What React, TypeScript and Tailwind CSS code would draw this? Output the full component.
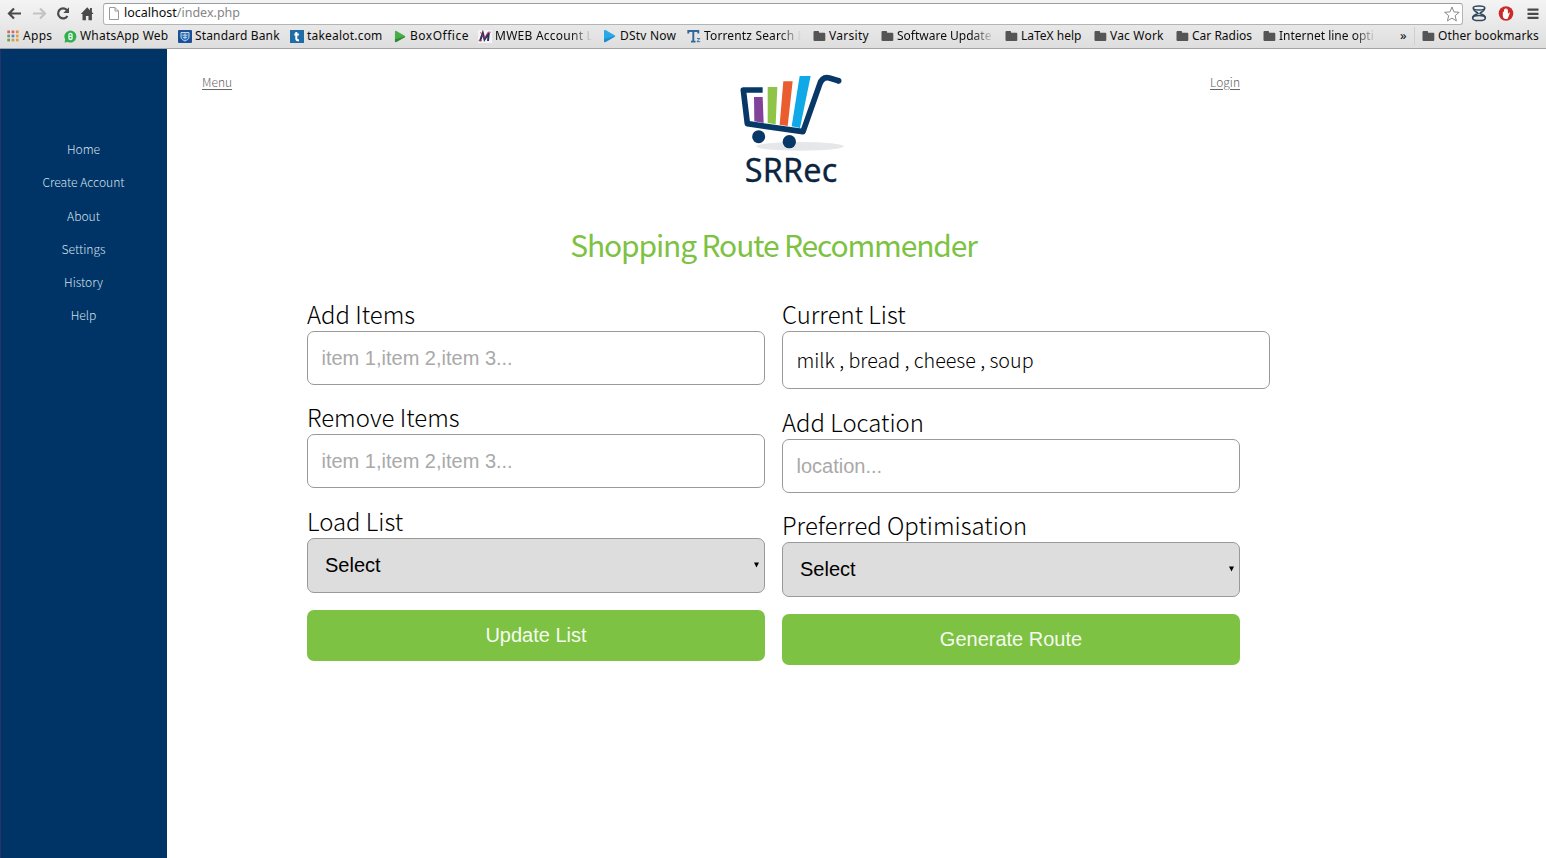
import type { ReactNode } from "react";

const sourceFont = "font-['Noto_Sans_CJK_SC','Noto_Sans',sans-serif]";
const arial = "font-['Liberation_Sans',Arial,sans-serif]";

function Folder() {
  return (
    <svg width="13" height="12" viewBox="0 0 13 12">
      <path d="M0.5 2a1 1 0 0 1 1-1h3.600a1 1 0 0 1 1 1v0.700h5.200a1 1 0 0 1 1 1V10a1 1 0 0 1-1 1H1.500a1 1 0 0 1-1-1z" fill="#555" />
    </svg>
  );
}

function AppsIcon() {
  const colors = ["#d9645a", "#d9645a", "#e08a4c", "#63a06b", "#5b7fc0", "#e0a33e", "#6f9a58", "#c9a23c", "#d9a33e"];
  return (
    <svg width="13" height="12" viewBox="0 0 13 12">
      {colors.map((c, i) => (
        <rect key={i} x={0.3 + (i % 3) * 4.3} y={0.5 + Math.floor(i / 3) * 4.1} width="2.7" height="2.7" fill={c} />
      ))}
    </svg>
  );
}

function WhatsApp() {
  return (
    <svg width="13" height="13" viewBox="0 0 13 13">
      <path d="M.5 12.500 1.200 9.500A6 6 0 1 1 4 12z" fill="#2fb04c" />
      <rect x="4.300" y="2.800" width="4.400" height="7.400" rx="2" fill="#e9f7ec" />
      <path d="M5.600 4.300h1.800v1.400H5.600zM5.600 7.100h1.800v1.400H5.600z" fill="#2fb04c" />
    </svg>
  );
}

function BankIcon() {
  return (
    <svg width="14" height="13" viewBox="0 0 14 13">
      <rect width="14" height="13" rx="1" fill="#1b4f98" />
      <path d="M3 2.500h8v4.500c0 2-2 3.200-4 4-2-.8-4-2-4-4z" fill="#2c6fb8" stroke="#d5e4f3" strokeWidth="0.9" />
      <path d="M4.500 5.200h5M5 7.400h4M7 3.200v6" stroke="#d5e4f3" strokeWidth="0.8" />
    </svg>
  );
}

function TakealotIcon() {
  return (
    <svg width="14" height="13" viewBox="0 0 14 13">
      <rect width="14" height="13" fill="#1f6ca6" />
      <path d="M6.300 2v6.800q0 1.700 2.700 1.400M4.300 4.600h4.600" stroke="#fff" strokeWidth="2" fill="none" />
    </svg>
  );
}

function Play({ fill, dark, size }: { fill: string; dark: string; size: number }) {
  return (
    <svg width={size} height={size + 1} viewBox="0 0 13 14">
      <path d="M1 2q0-1.500 1.500-1L11.600 6.200q1.200.8 0 1.600L2.500 13Q1 13.500 1 12z" fill={fill} />
      <path d="M1 12q0 1.500 1.500 1L11.600 7.800q.6-.4.6-.8L1 10z" fill={dark} />
    </svg>
  );
}

function MwebIcon() {
  return (
    <svg width="14" height="13" viewBox="0 0 14 13">
      <rect width="14" height="13" fill="#f6f4f6" />
      <path d="M2 11 4.800 3l1.700 6.500L10.800 3 10 11" stroke="#27305f" strokeWidth="2" fill="none" />
      <path d="M.5 10.800h3.500M2.500 2.200l3.500 5.500M12.800 2.200H10L6.500 8.500" stroke="#c2335a" strokeWidth="0.9" fill="none" />
    </svg>
  );
}

function TorrentzIcon() {
  return (
    <svg width="14" height="14" viewBox="0 0 14 14">
      <path d="M.8 2h11M1.300 1v3.500M11.300 1v3.500M6.300 2v10.500M4 12.600h4.500" stroke="#2f669c" strokeWidth="1.900" fill="none" />
      <path d="M10 9.500h2.800l-2.800 3.200h3.200" stroke="#2f669c" strokeWidth="0.9" fill="none" />
    </svg>
  );
}

type BookmarkProps = { icon: ReactNode; box: string; tracking?: string; fade?: boolean; children: string };

function Bookmark({ icon, box, tracking = "", fade = false, children }: BookmarkProps) {
  return (
    <a className={`flex shrink-0 items-center gap-[3px] ${box}`}>
      <span className="flex w-[14px] shrink-0 justify-center">{icon}</span>
      <span
        className={`whitespace-nowrap ${tracking} ${
          fade ? "w-[97px] [mask-image:linear-gradient(to_right,black_78%,transparent_100%)]" : ""
        }`}
      >
        {children}
      </span>
    </a>
  );
}

function BrowserBar() {
  return (
    <header className="h-[49px] shrink-0 border-b border-[#a3a3a3] bg-linear-to-b from-[#f4f4f4] to-[#dedede] font-['Noto_Sans','Open_Sans',sans-serif] text-xs text-[#0c0c0c]">
      <div className="flex h-[25px] items-center pt-[2px]">
        <div className="flex w-[103px] items-center">
          <svg className="ml-[7px]" width="15" height="14" viewBox="0 0 15 14" fill="none" stroke="#4a4a4a" strokeWidth="2.200">
            <path d="M14 6.500H2.500M7 1.500 2 6.500l5 5" />
          </svg>
          <svg className="ml-[10px]" width="15" height="14" viewBox="0 0 15 14" fill="none" stroke="#c3c3c3" strokeWidth="2.200">
            <path d="M1 6.500h11.500M8 1.500l5 5-5 5" />
          </svg>
          <svg className="ml-[9px]" width="14" height="14" viewBox="0 0 14 14">
            <path d="M11.400 9A5 5 0 1 1 10.800 3.100" fill="none" stroke="#4a4a4a" strokeWidth="2.200" />
            <path d="M13 .3v5.700H7.300z" fill="#4a4a4a" />
          </svg>
          <svg className="ml-[10px]" width="14" height="14" viewBox="0 0 14 14">
            <path d="M7.200.3.8 6.900h1.700V13.300h3.400V9h2.600v4.300h3.400V6.900h1.700L11.900 5V1H10v2.200z" fill="#4a4a4a" />
          </svg>
        </div>
        <div className="flex h-[22px] w-[1360px] items-center rounded-[3px] border border-[#b4b4b4] border-t-[#98a0a6] bg-white pl-[5px] pr-[2px]">
          <svg width="10" height="13" viewBox="0 0 10 13" fill="#fff" stroke="#9a9a9a">
            <path d="M.5.500h5.500l3.500 3.500v8.500h-9zM6 .5V4h3.500" />
          </svg>
          <span className="ml-[5px] flex-1 text-[12.500px]">
            localhost<span className="text-[#858585]">/index.php</span>
          </span>
          <svg width="17" height="16" viewBox="0 0 17 16" fill="#fff" stroke="#8a8a8a" strokeWidth="1">
            <path d="m9 1 1.900 4.900 5.300.4-4.100 3.400 1.300 5.200L9 12.100l-4.600 2.800 1.300-5.200L1.600 6.300l5.300-.4z" />
          </svg>
        </div>
        <svg className="ml-[8px]" width="16" height="17" viewBox="0 0 16 17" fill="none" stroke="#31495c" strokeWidth="1.500">
          <ellipse cx="8" cy="3" rx="5.800" ry="2" />
          <path d="M2.300 3.600C3 6.700 6 6.800 7 8.300 5 9.600 1.600 10 1.600 13M13.700 3.600C13 6.700 10 6.800 9 8.300c2 1.300 5.400 1.700 5.400 4.700" />
          <ellipse cx="8" cy="13" rx="6.400" ry="2.600" />
        </svg>
        <svg className="ml-[11px]" width="16" height="16" viewBox="0 0 16 16">
          <circle cx="8" cy="7.500" r="7.300" fill="#cb2a2a" />
          <path d="M4.800 6q.7-.9 1.200 0V3.500q.7-.8 1.200 0V2.600q.8-.8 1.400 0v.9q.7-.7 1.300 0v4.400l1-1.200q1.100-.4.9.5L10 12q-.4.900-1.200.9H7.200Q4.800 12.500 4.800 10z" fill="#fff" />
        </svg>
        <svg className="ml-[13px]" width="12" height="12" viewBox="0 0 12 12" stroke="#4a4a4a" strokeWidth="2.300">
          <path d="M.5 1.700h11M.5 5.800h11M.5 9.900h11" />
        </svg>
      </div>
      <div className="flex h-[22px] items-center pl-[6px]">
        <Bookmark icon={<AppsIcon />} box="w-[57px]" tracking="tracking-[0.3px]">Apps</Bookmark>
        <Bookmark icon={<WhatsApp />} box="w-[115px]" tracking="tracking-[0.2px]">WhatsApp Web</Bookmark>
        <Bookmark icon={<BankIcon />} box="w-[112px]" tracking="tracking-[0.15px]">Standard Bank</Bookmark>
        <Bookmark icon={<TakealotIcon />} box="w-[103px]" tracking="tracking-[0.2px]">takealot.com</Bookmark>
        <Bookmark icon={<Play fill="#49ac49" dark="#2c8c34" size={12} />} box="w-[85px]" tracking="tracking-[0.5px]">BoxOffice</Bookmark>
        <Bookmark icon={<MwebIcon />} box="w-[124px]" tracking="tracking-[0.25px]" fade>MWEB Account L</Bookmark>
        <Bookmark icon={<Play fill="#2aa8e6" dark="#1b8dd0" size={13} />} box="w-[85px] gap-[4px]" tracking="tracking-[0.2px]">DStv Now</Bookmark>
        <Bookmark icon={<TorrentzIcon />} box="w-[125px]" tracking="tracking-[0.150px]" fade>Torrentz Search E</Bookmark>
        <Bookmark icon={<Folder />} box="w-[68px]" tracking="tracking-[0.3px]">Varsity</Bookmark>
        <Bookmark icon={<Folder />} box="w-[124px]" tracking="tracking-[0px]" fade>Software Update</Bookmark>
        <Bookmark icon={<Folder />} box="w-[89px]">LaTeX help</Bookmark>
        <Bookmark icon={<Folder />} box="w-[82px]" tracking="tracking-[0.2px]">Vac Work</Bookmark>
        <Bookmark icon={<Folder />} box="w-[87px]">Car Radios</Bookmark>
        <Bookmark icon={<Folder />} box="w-[138px]" fade>Internet line opti</Bookmark>
        <span className="w-[14px] text-[13px]">»</span>
        <span className="mr-[6px] h-[18px] w-px bg-[#d0d0d0]" />
        <Bookmark icon={<Folder />} box="w-[120px]" tracking="tracking-[0.1px]">Other bookmarks</Bookmark>
      </div>
    </header>
  );
}

function Logo() {
  return (
    <svg width="140" height="135" viewBox="0 0 420 405">
      <ellipse cx="240" cy="259" rx="132" ry="13" fill="#e6e7e8" />
      <path d="M102 111h26l3 78-28-5z" fill="#83429a" />
      <path d="M143 81h29l-5 112-24-4z" fill="#8ec549" />
      <path d="M190 64h28l-15 134-24-4z" fill="#e95d2e" />
      <path d="M239 48h33l-32 156-25-5z" fill="#0fa9e8" />
      <path d="M128 90H70l12 101 167 24 50-142q8-24 29-19l30 9" fill="none" stroke="#073868" strokeWidth="17" strokeLinejoin="round" />
      <circle cx="356" cy="62.500" r="8.500" fill="#073868" />
      <circle cx="116" cy="230" r="19.500" fill="#073868" />
      <circle cx="208" cy="245" r="20" fill="#073868" />
      <text x="74" y="367" fontSize="97" textLength="278" className="font-['Noto_Sans','Open_Sans',sans-serif] font-normal" fill="#0b2440" stroke="#0b2440" strokeWidth="1">
        SRRec
      </text>
    </svg>
  );
}

function Field({ label, children }: { label: string; children: ReactNode }) {
  return (
    <label className="block">
      <span className={`block h-[33px] text-[23.900px] leading-[31px] font-light text-black ${sourceFont}`}>{label}</span>
      {children}
    </label>
  );
}

function TextInput({ placeholder }: { placeholder: string }) {
  return (
    <input
      placeholder={placeholder}
      className={`mb-[16.300px] block h-[54px] w-[458px] rounded-[7px] border border-[#999] bg-white px-[13.500px] text-xl placeholder:text-[#a9a9a9] ${arial}`}
    />
  );
}

function SelectBox() {
  return (
    <div className="mb-[17px] flex h-[55px] w-[458px] items-center justify-between rounded-[7px] border border-[#999] bg-[#ddd] pr-[4px] pb-[1px] pl-[17px]">
      <span className={`text-xl text-black ${arial}`}>Select</span>
      <svg width="7" height="6" viewBox="0 0 7 6">
        <path d="M1 .5h5L3.500 5.500z" fill="#000" />
      </svg>
    </div>
  );
}

function GreenButton({ children }: { children: string }) {
  return (
    <button className={`block h-[51px] w-[458px] rounded-[7px] bg-[#7dc242] pb-[1px] text-xl text-[#f4fbee] ${arial}`}>{children}</button>
  );
}

const menu = ["Home", "Create Account", "About", "Settings", "History", "Help"];

export default function App() {
  return (
    <div className="flex h-screen flex-col overflow-hidden bg-white">
      <BrowserBar />
      <div className="flex flex-1">
        <nav className={`flex w-[167px] shrink-0 flex-col items-center border-l border-[#26336a] bg-[#003466] pt-[83px] pr-[1px] text-[12.100px] font-light text-[#d3e0ec] ${sourceFont}`}>
          {menu.map((m) => (
            <a key={m} className="h-[33.300px] leading-[33px]">{m}</a>
          ))}
        </nav>
        <main className="flex-1">
          <div className={`ml-[35px] flex w-[1038px] items-start pt-[11px] text-[12px] font-light text-[#666] ${sourceFont}`}>
            <a className="mt-[13px] w-[30px] leading-[18px] underline underline-offset-2">Menu</a>
            <div className="ml-[488px] flex-1"><Logo /></div>
            <a className="mt-[13px] leading-[18px] underline underline-offset-2">Login</a>
          </div>
          <div className="ml-[140px] w-[933px]">
            <h1 className={`mt-[29px] h-[74px] text-center text-[30px] leading-[40px] tracking-[-1.150px] text-[#7dc242] ${sourceFont}`}>Shopping Route Recommender</h1>
            <div className="flex gap-[17px]">
              <div className="w-[458px]">
                <Field label="Add Items"><TextInput placeholder="item 1,item 2,item 3..." /></Field>
                <Field label="Remove Items"><TextInput placeholder="item 1,item 2,item 3..." /></Field>
                <Field label="Load List"><SelectBox /></Field>
                <GreenButton>Update List</GreenButton>
              </div>
              <div className="w-[458px]">
                <Field label="Current List">
                  <div className={`mb-[17px] h-[58px] w-[488px] rounded-[7px] border border-[#999] pl-[13.500px] text-[19.700px] leading-[56px] font-light text-black ${sourceFont}`}>
                    milk , bread , cheese , soup
                  </div>
                </Field>
                <Field label="Add Location"><TextInput placeholder="location..." /></Field>
                <Field label="Preferred Optimisation"><SelectBox /></Field>
                <GreenButton>Generate Route</GreenButton>
              </div>
            </div>
          </div>
        </main>
      </div>
    </div>
  );
}
